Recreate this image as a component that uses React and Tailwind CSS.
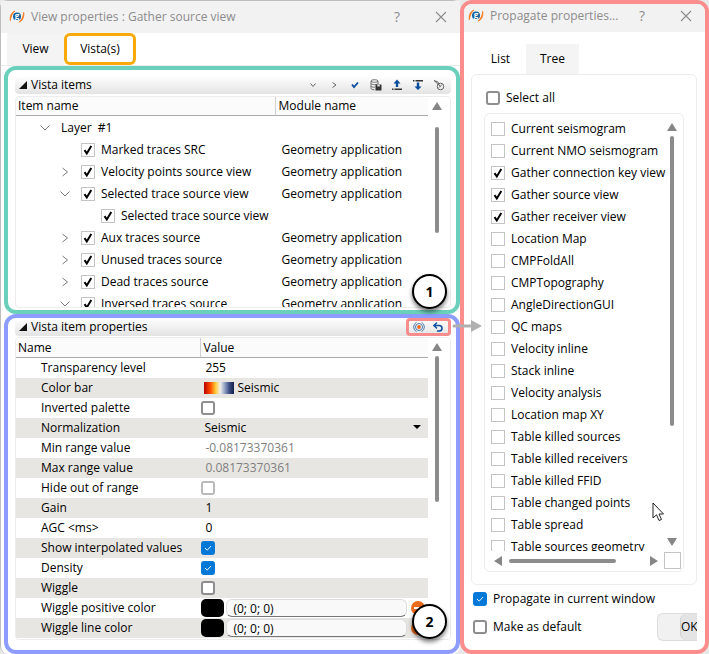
import React from 'react';
import { Undo2 } from 'lucide-react';

const items = [
  { name: 'Marked traces SRC' },
  { name: 'Velocity points source view', arrow: 'right' },
  { name: 'Selected trace source view', arrow: 'down' },
  { name: 'Selected trace source view', child: true },
  { name: 'Aux traces source', arrow: 'right' },
  { name: 'Unused traces source', arrow: 'right' },
  { name: 'Dead traces source', arrow: 'right' },
  { name: 'Inversed traces source', arrow: 'down' },
];

const properties = [
  { name: 'Transparency level', type: 'text', value: '255' },
  { name: 'Color bar', type: 'palette', value: 'Seismic' },
  { name: 'Inverted palette', type: 'check' },
  { name: 'Normalization', type: 'select', value: 'Seismic' },
  { name: 'Min range value', type: 'text', value: '-0.08173370361', muted: true },
  { name: 'Max range value', type: 'text', value: '0.08173370361', muted: true },
  { name: 'Hide out of range', type: 'check', muted: true },
  { name: 'Gain', type: 'text', value: '1' },
  { name: 'AGC <ms>', type: 'text', value: '0' },
  { name: 'Show interpolated values', type: 'check', checked: true },
  { name: 'Density', type: 'check', checked: true },
  { name: 'Wiggle', type: 'check' },
  { name: 'Wiggle positive color', type: 'color', value: '(0; 0; 0)' },
  { name: 'Wiggle line color', type: 'color', value: '(0; 0; 0)' },
];

const views = [
  { name: 'Current seismogram' },
  { name: 'Current NMO seismogram' },
  { name: 'Gather connection key view', checked: true },
  { name: 'Gather source view', checked: true },
  { name: 'Gather receiver view', checked: true },
  { name: 'Location Map' },
  { name: 'CMPFoldAll' },
  { name: 'CMPTopography' },
  { name: 'AngleDirectionGUI' },
  { name: 'QC maps' },
  { name: 'Velocity inline' },
  { name: 'Stack inline' },
  { name: 'Velocity analysis' },
  { name: 'Location map XY' },
  { name: 'Table killed sources' },
  { name: 'Table killed receivers' },
  { name: 'Table killed FFID' },
  { name: 'Table changed points' },
  { name: 'Table spread' },
  { name: 'Table sources geometry' },
];

function Logo() {
  return (
    <svg className="h-4 w-4 shrink-0" viewBox="0 0 16 16" fill="none">
      <circle cx="8" cy="7.500" r="4" fill="#17629c" />
      <text x="8" y="10" textAnchor="middle" fontSize="8" fontWeight="700" fill="#fff">g</text>
      <path d="M6 2C3 3 .5 6.500 1.300 11.800 1.800 8 3 4.500 6 2z" fill="#f47a20" stroke="#f47a20" strokeWidth="0.800" />
      <path d="M10 13.200C13 12.200 15.500 8.700 14.700 3.400 14.200 7.200 13 10.700 10 13.200z" fill="#f47a20" stroke="#f47a20" strokeWidth="0.800" />
    </svg>
  );
}

function TitleBar({ title }) {
  return (
    <div className="flex h-8 shrink-0 items-center bg-[#f2f2f2] pl-2 pr-[9px] text-[#8c8c8c]">
      <Logo />
      <h1 className="ml-[6px] min-w-0 flex-1 whitespace-nowrap">{title}</h1>
      <button aria-label="Help" className="w-5 text-center text-sm">?</button>
      <button aria-label="Close" className="ml-6 flex w-5 justify-center">
        <svg className="h-3 w-3" viewBox="0 0 12 12" stroke="#8c8c8c" strokeWidth="1.100">
          <path d="M1 1l10 10M11 1L1 11" />
        </svg>
      </button>
    </div>
  );
}

// square tick box used in the trees
function TreeCheck({ id, checked, label }) {
  return (
    <span className="grid h-[14px] w-[14px] shrink-0">
      <input
        id={id}
        type="checkbox"
        aria-label={label}
        defaultChecked={checked}
        className="peer col-start-1 row-start-1 h-[14px] w-[14px] appearance-none border border-[#c4c4c4] bg-white"
      />
      <svg
        className="pointer-events-none invisible col-start-1 row-start-1 h-[14px] w-[14px] peer-checked:visible"
        viewBox="0 0 14 14"
        fill="none"
      >
        <path d="M3.500 7.200l2.300 3.200L10.300 3" stroke="#000" strokeWidth="2" />
      </svg>
    </span>
  );
}

// rounded tick box used in the forms
function FormCheck({ id, checked, muted, label }) {
  return (
    <span className="grid h-[14px] w-[14px] shrink-0">
      <input
        id={id}
        type="checkbox"
        aria-label={label}
        defaultChecked={checked}
        disabled={muted}
        className="peer col-start-1 row-start-1 h-[14px] w-[14px] appearance-none rounded-[3px] border-2 border-[#8e8e8e] bg-white checked:border-[#0078d7] checked:bg-[#0078d7] disabled:border-[#b9b9b9]"
      />
      <svg
        className="pointer-events-none invisible col-start-1 row-start-1 h-[14px] w-[14px] peer-checked:visible"
        viewBox="0 0 14 14"
        fill="none"
      >
        <path d="M4 7l2.200 2.200L10 5" stroke="#fff" strokeWidth="0.900" />
      </svg>
    </span>
  );
}

function Expander({ open }) {
  return (
    <button aria-label={open ? 'Collapse' : 'Expand'} className="flex h-3 w-3 shrink-0 items-center justify-center">
      <svg className="h-3 w-3" viewBox="0 0 12 12" fill="none" stroke="#7a7a7a">
        <path d={open ? 'M1.500 3.500L6 8l4.500-4.500' : 'M3.500 2l5 4-5 4'} />
      </svg>
    </button>
  );
}

function Triangle({ dir }) {
  const paths = {
    up: 'M5 1l5 8H0z',
    down: 'M0 1h10L5 9z',
    left: 'M1 5l8-5v10z',
    right: 'M9 5L1 0v10z',
  };
  return (
    <svg className="h-[10px] w-[10px] shrink-0" viewBox="0 0 10 10" fill="#868686">
      <path d={paths[dir]} />
    </svg>
  );
}

function SectionHeader({ title, children }) {
  return (
    <div className="flex h-[18px] items-center rounded bg-linear-to-b from-white to-[#e3e3e3] pl-1">
      <svg className="h-2 w-2 shrink-0" viewBox="0 0 8 8">
        <path d="M8 0v8H0z" fill="#111" />
      </svg>
      <h2 className="ml-1 flex-1">{title}</h2>
      {children}
    </div>
  );
}

function Toolbar() {
  const button = 'flex h-[18px] w-[21px] items-center justify-center';
  return (
    <div className="flex pr-[2px]">
      <button aria-label="Expand all" className={button}>
        <svg className="h-3 w-3" viewBox="0 0 12 12" fill="none" stroke="#666">
          <path d="M3.500 4.500L6 7.500l2.500-3" />
        </svg>
      </button>
      <button aria-label="Collapse all" className={button}>
        <svg className="h-3 w-3" viewBox="0 0 12 12" fill="none" stroke="#666">
          <path d="M4.500 3.500l3.500 2.500-3.500 2.500" />
        </svg>
      </button>
      <button aria-label="Check all" className={button}>
        <svg className="h-3 w-3" viewBox="0 0 12 12" fill="none" stroke="#0a4d9c" strokeWidth="1.800">
          <path d="M3 5.500l2 2.500 4-4.500" />
        </svg>
      </button>
      <button aria-label="Save to database" className={button}>
        <svg className="h-3 w-3" viewBox="0 0 12 12" fill="none" stroke="#666" strokeWidth="0.900">
          <ellipse cx="4.500" cy="2" rx="3.500" ry="1.300" />
          <path d="M1 2v7.500c0 .8 1.500 1.300 3.500 1.300M8 2v3M1 4.500c0 1.500 7 1.500 7 0M1 7c0 1 2 1.300 4 1.200" />
          <path d="M5.500 5.500h6v6h-6z" fill="#333" stroke="none" />
          <path d="M7.300 5.500h2.500v2H7.300z" fill="#ddd" stroke="none" />
        </svg>
      </button>
      <button aria-label="Move up" className={button}>
        <svg className="h-3 w-3" viewBox="0 0 12 12">
          <path d="M6 .5l3.500 4h-2.300V8H4.800V4.500H2.500z" fill="#0a4d9c" />
          <path d="M1 9.500h1.500V11H1zM3.500 9.500H11V11H3.500z" fill="#333" />
        </svg>
      </button>
      <button aria-label="Move down" className={button}>
        <svg className="h-3 w-3" viewBox="0 0 12 12">
          <path d="M6 11l3.500-3.500H7.200V3.500H4.800v4H2.500z" fill="#0a4d9c" />
          <path d="M1 1h1.500v1.500H1zM3.500 1H11v1.500H3.500z" fill="#333" />
        </svg>
      </button>
      <button aria-label="Locate" className={button}>
        <svg className="h-3 w-3" viewBox="0 0 12 12" fill="none" stroke="#666">
          <circle cx="7.500" cy="7.500" r="3.300" />
          <path d="M1 1.500l4 1.500M1 1.500l6.500 6M5 3l1 3M6 8.500L9 5.500" />
        </svg>
      </button>
    </div>
  );
}

function ScrollUpBar({ thumb }) {
  return (
    <div className="flex w-[22px] shrink-0 flex-col items-center gap-1 pr-1 pt-1">
      <Triangle dir="up" />
      <div className={thumb} />
    </div>
  );
}

function Badge({ children, place }) {
  return (
    <div
      className={`absolute z-10 flex h-[35px] w-[35px] items-center justify-center rounded-full border-2 border-black bg-white text-sm font-bold shadow-[0_3px_4px_rgba(0,0,0,0.5)] ${place}`}
    >
      {children}
    </div>
  );
}

function ItemsTable() {
  return (
    <div className="flex h-[212px] overflow-hidden rounded border border-[#ededed]">
      <div className="min-w-0 flex-1">
        <table className="w-full table-fixed border-separate border-spacing-0 text-left">
          <colgroup>
            <col className="w-[63%]" />
            <col />
          </colgroup>
          <thead>
            <tr className="h-[19px] bg-[#fbfbfb]">
              <th className="border-b border-r border-b-[#a9a9a9] border-r-[#d0d0d0] pl-[2px] font-normal">Item name</th>
              <th className="border-b border-[#a9a9a9] pl-[3px] font-normal">Module name</th>
            </tr>
          </thead>
          <tbody>
            <tr className="h-[23px]">
              <td className="pl-[23px]">
                <div className="flex items-center gap-[10px]">
                  <Expander open />
                  <span className="whitespace-pre">{'Layer  #1'}</span>
                </div>
              </td>
              <td />
            </tr>
            {items.map((item, i) => (
              <tr key={i} className="h-[22px]">
                <td className={item.child ? 'pl-[63px]' : 'pl-[43px]'}>
                  <div className="flex items-center">
                    {item.arrow ? <Expander open={item.arrow === 'down'} /> : <span className="w-3" />}
                    <span className="ml-[10px] flex items-center gap-[6px]">
                      <TreeCheck id={`item-${i}`} checked />
                      <label htmlFor={`item-${i}`} className="whitespace-nowrap">{item.name}</label>
                    </span>
                  </div>
                </td>
                <td className="whitespace-nowrap pl-[6px]">{item.child ? '' : 'Geometry application'}</td>
              </tr>
            ))}
          </tbody>
        </table>
      </div>
      <ScrollUpBar thumb="mt-3 h-[106px] w-1 rounded-full bg-[#8c8c8c]" />
    </div>
  );
}

function PropertyValue({ property }) {
  const { type, value, name, checked, muted } = property;
  if (type === 'check') {
    return <FormCheck label={name} checked={checked} muted={muted} />;
  }
  if (type === 'palette') {
    return (
      <div className="flex items-center gap-[3px] pl-[3px]">
        <span className="h-3 w-[30px] bg-[linear-gradient(90deg,#b80000,#ff5000_22%,#ffc832_38%,#f2f0ea_54%,#9aa7c8_68%,#3c4f86_84%,#141e46)]" />
        {value}
      </div>
    );
  }
  if (type === 'select') {
    return (
      <div className="flex items-center pl-[3px] pr-[7px]">
        <select aria-label={name} className="h-5 min-w-0 flex-1 appearance-none">
          <option>{value}</option>
        </select>
        <svg className="h-2 w-2" viewBox="0 0 8 8">
          <path d="M0 1h8L4 5z" fill="#000" />
        </svg>
      </div>
    );
  }
  if (type === 'color') {
    return (
      <div className="flex h-5 items-center">
        <button aria-label={`Pick ${name}`} className="h-[18px] w-[23px] shrink-0 rounded-[5px] bg-black" />
        <input
          aria-label={name}
          defaultValue={value}
          className="ml-[2px] h-[18px] min-w-0 flex-1 rounded-md border border-[#dcdcdc] border-b-[#777] bg-[#f9f9f9] px-[6px]"
        />
        <button aria-label={`Reset ${name}`} className="ml-1 mr-[3px] flex h-[14px] w-[14px] shrink-0 items-center justify-center rounded-full bg-[#ec6a1c]">
          <span className="h-[2px] w-2 bg-white" />
        </button>
      </div>
    );
  }
  return <span className={muted ? 'pl-1 text-[#808080]' : 'pl-1'}>{value}</span>;
}

function PropertiesTable() {
  return (
    <div className="flex h-[303px] overflow-hidden rounded border border-[#ededed]">
      <div className="min-w-0 flex-1">
        <table className="w-full table-fixed border-separate border-spacing-0 text-left">
          <colgroup>
            <col className="w-[45%]" />
            <col />
          </colgroup>
          <thead>
            <tr className="h-5 bg-[#fbfbfb]">
              <th className="border-b border-r border-b-[#a9a9a9] border-r-[#d0d0d0] pl-[2px] font-normal">Name</th>
              <th className="border-b border-[#a9a9a9] pl-[2px] font-normal">Value</th>
            </tr>
          </thead>
          <tbody>
            {properties.map((property) => (
              <tr key={property.name} className="h-5 even:bg-[#e8e6e2]">
                <td className="whitespace-nowrap pl-[25px]">{property.name}</td>
                <td>
                  <PropertyValue property={property} />
                </td>
              </tr>
            ))}
          </tbody>
        </table>
      </div>
      <ScrollUpBar thumb="h-[146px] w-1 rounded-full bg-[#8c8c8c]" />
    </div>
  );
}

function ViewProperties() {
  return (
    <section className="flex min-w-0 flex-col rounded-lg border-l border-t border-[#bdbdbd] bg-white">
      <TitleBar title="View properties : Gather source view" />
      <nav className="flex h-8 items-stretch pl-[6px]">
        <button className="w-[57px] bg-[#f4f4f4]">View</button>
        <button className="w-[72px] rounded-md border-[3px] border-[#faa80a]">Vista(s)</button>
      </nav>
      <div className="flex flex-1 flex-col border-t border-[#ededed] pl-[3px]">
        <div className="relative rounded-xl border-4 border-[#6bd0bb] pb-[2px] pl-[7px] pr-[5px] pt-[6px]">
          <SectionHeader title="Vista items">
            <Toolbar />
          </SectionHeader>
          <div className="pt-[2px]">
            <ItemsTable />
          </div>
          <Badge place="bottom-[1px] right-[9px]">1</Badge>
        </div>
        <div className="relative flex-1 rounded-xl border-4 border-[#8f9cff] pb-2 pl-[7px] pr-[5px]">
          <SectionHeader title="Vista item properties">
            <div className="flex h-[18px] w-[45px] items-center justify-around rounded border-[3px] border-[#f98d8d]">
              <button aria-label="Propagate">
                <svg className="h-3 w-3" viewBox="0 0 12 12" fill="none" stroke="#3d6fa8" strokeWidth="0.900">
                  <path d="M3.500 1.300a5.300 5.300 0 0 0 0 9.400M8.500 1.300a5.300 5.300 0 0 1 0 9.400" />
                  <circle cx="6" cy="6" r="3.500" />
                  <circle cx="6" cy="6" r="1.900" fill="#ec6a1c" stroke="none" />
                </svg>
              </button>
              <button aria-label="Undo">
                <Undo2 className="h-3 w-3 text-[#0a4d9c]" strokeWidth={3} />
              </button>
            </div>
          </SectionHeader>
          <div className="pt-[1px]">
            <PropertiesTable />
          </div>
          <Badge place="bottom-[11px] right-[9px]">2</Badge>
          <svg className="absolute -right-[26px] top-[2px] z-10 h-3 w-[30px]" viewBox="0 0 30 12" fill="#b0b0b0">
            <path d="M2 4.500h17V0l11 6-11 6V7.500H2a1.500 1.500 0 0 1 0-3z" />
          </svg>
        </div>
      </div>
    </section>
  );
}

function PropagateProperties() {
  return (
    <section className="relative flex min-w-0 flex-col overflow-hidden rounded-xl border-4 border-[#fb8d8d] bg-white">
      <div className="-ml-1 -mt-1">
        <TitleBar title="Propagate properties..." />
      </div>
      <div className="flex flex-1 flex-col pl-[7px] pr-2 pt-3">
        <nav className="flex h-[30px]">
          <button className="w-[55px] pl-1">List</button>
          <button className="w-[53px] bg-[#f4f4f4]">Tree</button>
        </nav>
        <div className="rounded-md border border-[#ececec] px-3 pb-3 pt-[15px]">
          <div className="flex h-4 items-center gap-[6px] pl-[2px]">
            <FormCheck id="select-all" />
            <label htmlFor="select-all">Select all</label>
          </div>
          <div className="mt-[7px] rounded-md border border-[#ececec] pb-[1px] pl-[6px] pt-1">
            <div className="flex h-[433px] pr-[5px]">
              <ul className="min-w-0 flex-1 overflow-hidden">
                {views.map((view, i) => (
                  <li key={view.name} className="flex h-[22px] items-center gap-[6px]">
                    <TreeCheck id={`view-${i}`} checked={view.checked} />
                    <label htmlFor={`view-${i}`} className="whitespace-nowrap">{view.name}</label>
                  </li>
                ))}
              </ul>
              <div className="flex w-3 shrink-0 flex-col items-center gap-1 pb-1 pt-1">
                <Triangle dir="up" />
                <div className="h-[290px] w-1 rounded-full bg-[#8c8c8c]" />
                <div className="flex-1" />
                <Triangle dir="down" />
              </div>
            </div>
            <div className="flex h-[19px] items-center pl-[2px] pr-[2px]">
              <Triangle dir="left" />
              <div className="mx-[6px] flex-1">
                <div className="h-1 w-4/5 rounded-full bg-[#8c8c8c]" />
              </div>
              <Triangle dir="right" />
              <div className="ml-[5px] h-[17px] w-[17px] border border-[#c4c4c4]" />
            </div>
          </div>
        </div>
        <div className="mt-1 flex h-5 items-center gap-[6px] pl-[2px]">
          <FormCheck id="propagate-current" checked />
          <label htmlFor="propagate-current" className="whitespace-nowrap">Propagate in current window</label>
        </div>
        <div className="mt-1 flex h-7 items-center gap-[6px] overflow-hidden pl-[2px]">
          <FormCheck id="make-default" />
          <label htmlFor="make-default" className="flex-1">Make as default</label>
          <div className="flex h-7 w-10 shrink-0 overflow-hidden rounded-l-md border border-r-0 border-[#dcdcdc] bg-[#f1f1f1] pl-[22px]">
            <button className="w-[46px] shrink-0 rounded-l-md border-l border-[#d0d0d0] bg-[#e4e4e4] text-left font-medium">OK</button>
          </div>
        </div>
      </div>
      <svg className="absolute bottom-[128px] right-[41px] h-5 w-3" viewBox="0 0 12 20">
        <path d="M1 1v15l3.500-3.200L7 18.500l2.500-1L7 12h4.500z" fill="#fff" stroke="#222" />
      </svg>
    </section>
  );
}

export default function App() {
  return (
    <main className="grid min-h-screen grid-cols-[460fr_249fr] bg-[#e9e9e9] font-['Open_Sans',sans-serif] text-xs leading-4 text-black">
      <ViewProperties />
      <PropagateProperties />
    </main>
  );
}
